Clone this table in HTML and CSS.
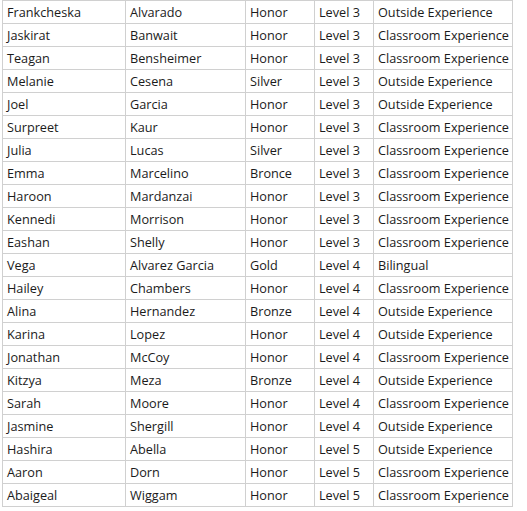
FILE: index.html
```html
<!DOCTYPE html>
<html>
<head>
<meta charset="utf-8">
<link rel="stylesheet" href="styles.css">
</head>
<body>
<table class="grid">
<colgroup><col class="c1"><col class="c2"><col class="c3"><col class="c4"><col class="c5"></colgroup>
<tbody>
<tr><td>Frankcheska</td><td>Alvarado</td><td>Honor</td><td>Level 3</td><td>Outside Experience</td></tr>
<tr><td>Jaskirat</td><td>Banwait</td><td>Honor</td><td>Level 3</td><td>Classroom Experience</td></tr>
<tr><td>Teagan</td><td>Bensheimer</td><td>Honor</td><td>Level 3</td><td>Classroom Experience</td></tr>
<tr><td>Melanie</td><td>Cesena</td><td>Silver</td><td>Level 3</td><td>Outside Experience</td></tr>
<tr><td>Joel</td><td>Garcia</td><td>Honor</td><td>Level 3</td><td>Outside Experience</td></tr>
<tr><td>Surpreet</td><td>Kaur</td><td>Honor</td><td>Level 3</td><td>Classroom Experience</td></tr>
<tr><td>Julia</td><td>Lucas</td><td>Silver</td><td>Level 3</td><td>Classroom Experience</td></tr>
<tr><td>Emma</td><td>Marcelino</td><td>Bronce</td><td>Level 3</td><td>Classroom Experience</td></tr>
<tr><td>Haroon</td><td>Mardanzai</td><td>Honor</td><td>Level 3</td><td>Classroom Experience</td></tr>
<tr><td>Kennedi</td><td>Morrison</td><td>Honor</td><td>Level 3</td><td>Classroom Experience</td></tr>
<tr><td>Eashan</td><td>Shelly</td><td>Honor</td><td>Level 3</td><td>Classroom Experience</td></tr>
<tr><td>Vega</td><td>Alvarez Garcia</td><td>Gold</td><td>Level 4</td><td>Bilingual</td></tr>
<tr><td>Hailey</td><td>Chambers</td><td>Honor</td><td>Level 4</td><td>Classroom Experience</td></tr>
<tr><td>Alina</td><td>Hernandez</td><td>Bronze</td><td>Level 4</td><td>Outside Experience</td></tr>
<tr><td>Karina</td><td>Lopez</td><td>Honor</td><td>Level 4</td><td>Outside Experience</td></tr>
<tr><td>Jonathan</td><td>McCoy</td><td>Honor</td><td>Level 4</td><td>Classroom Experience</td></tr>
<tr><td>Kitzya</td><td>Meza</td><td>Bronze</td><td>Level 4</td><td>Outside Experience</td></tr>
<tr><td>Sarah</td><td>Moore</td><td>Honor</td><td>Level 4</td><td>Classroom Experience</td></tr>
<tr><td>Jasmine</td><td>Shergill</td><td>Honor</td><td>Level 4</td><td>Outside Experience</td></tr>
<tr><td>Hashira</td><td>Abella</td><td>Honor</td><td>Level 5</td><td>Outside Experience</td></tr>
<tr><td>Aaron</td><td>Dorn</td><td>Honor</td><td>Level 5</td><td>Classroom Experience</td></tr>
<tr><td>Abaigeal</td><td>Wiggam</td><td>Honor</td><td>Level 5</td><td>Classroom Experience</td></tr>
</tbody>
</table>
</body>
</html>
```
FILE: styles.css
```css
html, body {
  margin: 0;
  padding: 0;
  background: #ffffff;
}
body {
  padding-left: 2px;
}
.grid {
  border-collapse: collapse;
  table-layout: fixed;
  width: 511px;
  margin-top: 0;
  font-family: "Open Sans", "Noto Sans", sans-serif;
  font-size: 12.7px;
  color: #1b1b1b;
}
.c1 { width: 123px; }
.c2 { width: 120px; }
.c3 { width: 69px; }
.c4 { width: 59px; }
.c5 { width: 139px; }
.grid td {
  border: 1px solid #d0d0d0;
  height: 23px;
  padding: 1px 0 0 4px;
  box-sizing: border-box;
  white-space: nowrap;
  overflow: hidden;
  line-height: 21px;
  vertical-align: middle;
}
```
